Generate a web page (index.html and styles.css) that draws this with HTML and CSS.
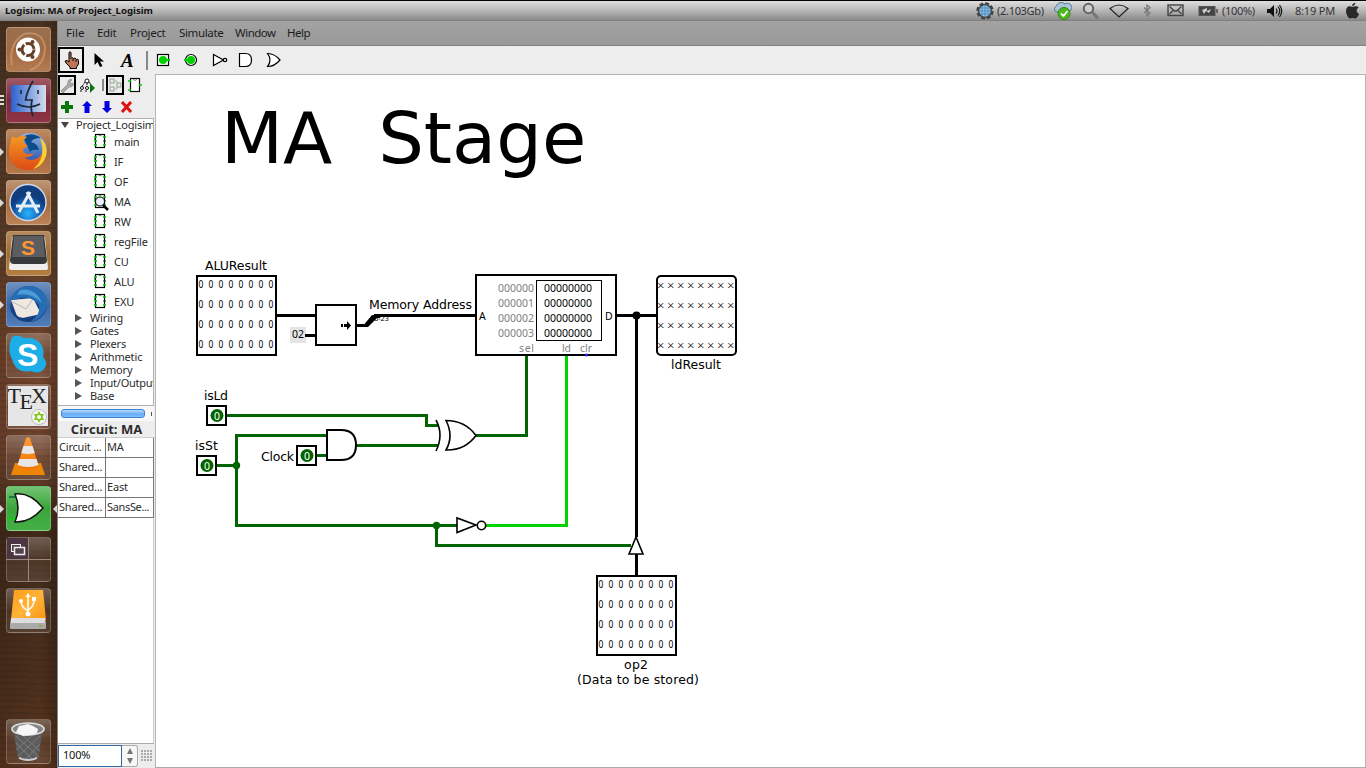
FILE: index.html
```html
<!DOCTYPE html>
<html lang="en">
<head>
<meta charset="utf-8">
<title>Logisim: MA of Project_Logisim</title>
<link rel="stylesheet" href="styles.css">
</head>
<body>
<svg width="0" height="0" class="defs">
  <defs>
    <symbol id="chip" viewBox="0 0 14 16"><rect x="2.500" y="1.500" width="9" height="13" fill="#fff" stroke="#000" stroke-width="1.200"/><path d="M5.500 2q1.500 2 3 0" fill="none" stroke="#777"/><path d="M1 4h3M1 8h3M1 12h3" stroke="#0c0" stroke-width="1.600"/><path d="M10 4h3M10 12h3" stroke="#0c0" stroke-width="1.600"/><path d="M10 8h3M1 6h2" stroke="#042" stroke-width="1.200"/></symbol>
    <linearGradient id="blue" x2="0" y2="1"><stop stop-color="#8fb3df"/><stop offset="1" stop-color="#1746ae"/></linearGradient>
    <linearGradient id="face" x2="1" y2="0"><stop stop-color="#2c60cf"/><stop offset=".55" stop-color="#86a5df"/><stop offset="1" stop-color="#d5dbe9"/></linearGradient>
    <radialGradient id="appblue" cy=".8"><stop stop-color="#29b3ff"/><stop offset=".8" stop-color="#1455a5"/><stop offset="1" stop-color="#123d7c"/></radialGradient>
    <linearGradient id="cone" x2="0" y2="1"><stop stop-color="#ff9a38"/><stop offset="1" stop-color="#f07800"/></linearGradient>
    <linearGradient id="drive" x2="1" y2="1"><stop stop-color="#ff9c14"/><stop offset=".5" stop-color="#ffb43a"/><stop offset="1" stop-color="#f79410"/></linearGradient>
    <linearGradient id="fox" x2="0" y2="1"><stop stop-color="#f49a23"/><stop offset="1" stop-color="#dd4a14"/></linearGradient>
  </defs>
</svg>

<header class="panel">
  <span class="panel-title">Logisim: MA of Project_Logisim</span>
  <div class="tray">
    <svg class="gear" width="18" height="18" viewBox="0 0 18 18"><circle cx="9" cy="9" r="7.400" fill="none" stroke="#444" stroke-width="2.600" stroke-dasharray="3.800 2.010"/><circle cx="9" cy="9" r="6.400" fill="#8cc3ec" stroke="#444" stroke-width="1.500"/><path d="M3 9h12M4 6h10M4 12h10M9 3v12M6 4v10M12 4v10" stroke="#4c86b4" stroke-width=".8"/></svg>
    <span class="t-mem">(2.103Gb)</span>
    <svg class="cloud" width="20" height="19" viewBox="0 0 20 19"><path d="M4 11a3.500 3.500 0 0 1 .5-6A5 5 0 0 1 13 3a4 4 0 0 1 5 7z" fill="#a9c4d6" stroke="#557b93"/><circle cx="12" cy="12.500" r="6" fill="#4fb81e" stroke="#2f8a10"/><path d="M9 12.500l2.500 2.500 4-5" fill="none" stroke="#fff" stroke-width="1.800"/></svg>
    <svg class="search" width="17" height="18" viewBox="0 0 17 18"><circle cx="6.500" cy="6.500" r="4.700" fill="#ccc" stroke="#666" stroke-width="2"/><path d="M10 10l6 6.500" stroke="#777" stroke-width="3"/></svg>
    <svg class="wifi" width="20" height="14" viewBox="0 0 20 14"><path d="M1 4.500Q10-2.500 19 4.500L10 13z" fill="none" stroke="#222" stroke-width="1.200"/></svg>
    <svg class="bt" width="9" height="13" viewBox="0 0 9 13"><path d="M1 3.500l6 5.500-3 3V1l3 2.500L1 9" fill="none" stroke="#777" stroke-width="1.200"/></svg>
    <svg class="mail" width="17" height="13" viewBox="0 0 17 13"><rect x="1" y="1" width="15" height="10.500" fill="none" stroke="#444" stroke-width="1.400"/><path d="M2.500 2.500l5 4.500h2l5-4.500M2.500 10l4-4M14.500 10l-4-4" fill="none" stroke="#444" stroke-width="1.300"/></svg>
    <svg class="batt" width="20" height="12" viewBox="0 0 20 12"><rect x="1" y="1.500" width="16" height="9" fill="#444" stroke="#555"/><path d="M18 4h2v4h-2z" fill="#666"/><path d="M4 5l5-2v3l4-2-2 4-3-2-2 3z" fill="#ccc"/></svg>
    <span class="t-batt">(100%)</span>
    <svg class="sound" width="17" height="14" viewBox="0 0 17 14"><path d="M1 5h3l4-4v12L4 9H1z" fill="#111"/><path d="M10 4.500q2 2.500 0 5M12 2.500q3.500 4.500 0 9M13.500 1q4.500 6 0 12" fill="none" stroke="#111" stroke-width="1.200"/></svg>
    <span class="t-time">8:19 PM</span>
    <svg class="apple" width="15" height="17" viewBox="0 0 15 17"><path d="M7.500 5C4 3 1 5 1 9c0 4 3 8 4.500 7.500 1.500-.6 2.500-.6 4 0C11.500 17 14 13 14 12c-3-1.500-3-5-.3-6.500C12 3.500 9.500 4 7.500 5z" fill="#292929"/><path d="M7 4.300C7 2 9 .8 10.200.5 10.500 2.500 9 4 7 4.300z" fill="#292929"/></svg>
  </div>
</header>

<div class="desktop">
  <nav class="dock">
    <div class="tile ubuntu"><svg viewBox="0 0 45 45"><path d="M6 38Q2 17 18 7Q36 3 39 20Q39 38 24 43" fill="none" stroke="#d3a47c" stroke-width="2" opacity=".6"/><circle cx="22" cy="22.500" r="12" fill="#fff"/><circle cx="22" cy="22.500" r="6" fill="none" stroke="#654026" stroke-width="3" stroke-dasharray="11 1.570"/><g fill="#654026"><circle cx="13.500" cy="22.500" r="2"/><circle cx="26.500" cy="15" r="2"/><circle cx="26.500" cy="30" r="2"/></g></svg></div>
    <div class="tile finder run3"><svg viewBox="0 0 45 45"><rect x="5" y="7" width="35" height="27" rx="1" fill="url(#face)"/><path d="M15 12v4M32 12v4" stroke="#123" stroke-width="1.500"/><path d="M27 3Q21 13 19.500 22H26Q24 31 27 38M11 26q12 6 23 0" fill="none" stroke="#1c2638" stroke-width="1.700"/></svg></div>
    <div class="tile firefox run"><svg viewBox="0 0 45 45"><circle cx="24" cy="21" r="17" fill="url(#blue)"/><path d="M17 8q8-6 18 1-8 0-10 4 7 2 8 8-7-1-9 2z" fill="#0c4c89"/><path d="M5 9c3-3 4 0 5 0 3-2 8-3 11-1-3 2-4 4-3 6l4 3-5 3c0 5 6 6 11 4-2 4-7 5-10 4 7 6 18 2 19-8l1-5c5 13-2 26-15 26C8 41 2 31 3 21c0-4 2-6 2-12z" fill="url(#fox)"/><path d="M34 9c6 4 8 12 6 18-3 9-9 12-13 13 9-7 12-17 7-31z" fill="#f9cf36"/></svg></div>
    <div class="tile store run"><svg viewBox="0 0 45 45"><circle cx="22" cy="22.500" r="18" fill="url(#appblue)" stroke="#cbd8ed" stroke-width="1.500"/><path d="M10 26h24M21 12l11 21M24 12L13 32" fill="none" stroke="#e5edf6" stroke-width="3"/></svg></div>
    <div class="tile sublime run"><svg viewBox="0 0 45 45"><path d="M6 6h33l3 31q0 2-3 2H6q-3 0-3-2z" fill="#eee"/><path d="M7 4h31l3 25q0 4-4 4H8q-4 0-4-4z" fill="#38393b"/><path d="M8 5h29l2 21H6z" fill="#5b5d60"/><text x="15" y="24" class="sub-s">S</text></svg></div>
    <div class="tile thunder run"><svg viewBox="0 0 45 45"><circle cx="23" cy="22" r="18" fill="#173f80"/><path d="M5 18l22-2 8 16-23 5z" fill="#eee8e1"/><path d="M5 19l15 8 7-10" fill="none" stroke="#bcb8b3"/><path d="M4 17Q11 3 25 4q17 3 16 19-3 14-17 17 11-7 9-17-9-11-22-6-4 0-7 2z" fill="#266eb3"/><path d="M14 8q15-3 22 13-11-11-25-8z" fill="#4b9cd8"/><path d="M4 20q0 10 9 15l9 2q-3 4-9 1Q2 31 4 20z" fill="#173f80"/></svg></div>
    <div class="tile skype"><svg viewBox="0 0 45 45"><path d="M6 4q6-3 12 1 14-2 19 10 1 5 0 9 6 6 1 12-5 6-13 2Q10 41 6 26 2 20 4 10z" fill="#1daee8"/><text x="11" y="33" class="sky-s">S</text></svg></div>
    <div class="tile tex"><svg viewBox="0 0 45 45"><rect x="2" y="2" width="40" height="40" fill="#e6e6e6"/><text x="1.500" y="19" class="tex-t">T<tspan x="13.500" y="25">E</tspan><tspan x="25" y="19">X</tspan></text><circle cx="33" cy="33" r="7.500" fill="#f7f7f7" stroke="#bbb"/><path d="M33 27l1.700 3 3.500-.1-1.600 3.100 1.600 3.100-3.500-.1-1.700 3-1.700-3-3.500.1 1.600-3.100-1.600-3.100 3.500.1z" fill="#83c81f"/><circle cx="33" cy="33" r="2" fill="#fff"/></svg></div>
    <div class="tile vlc"><svg viewBox="0 0 45 45"><path d="M9 28L5 40h34l-4-12z" fill="#ec8508"/><path d="M20 3q2-1.500 4 0l9 29q-11 6-22 0z" fill="url(#cone)"/><path d="M17.500 11h9l2.300 7q-6.500 2-13.500 0z" fill="#e7e7e7"/><path d="M13.500 24h17l2 6q-10 4-21 0z" fill="#e7e7e7"/></svg></div>
    <div class="tile logisim run active"><svg viewBox="0 0 45 45"><path d="M3 11h10" stroke="#063" stroke-width="1.500"/><path d="M3 33h10" stroke="#0d0" stroke-width="1.500"/><path d="M9 8Q24 6 37 22 24 37 9 36 15 22 9 8z" fill="#fff" stroke="#111" stroke-width="1.500"/></svg></div>
    <div class="tile spaces"><svg viewBox="0 0 45 45"><path d="M1 1h21v21H1z" fill="#4b3541"/><path d="M22.500 0v45M0 22.500h45" stroke="#9b897f"/><g fill="#54434c" stroke="#eee"><rect x="5.500" y="7.500" width="9" height="7"/><rect x="8.500" y="10.500" width="10" height="7" stroke-width="1.500"/></g></svg></div>
    <div class="tile usb"><svg viewBox="0 0 45 45"><path d="M8 2h29l3 30H5z" fill="url(#drive)"/><path d="M5 30h34l1 9q0 2-2 2H6q-2 0-2-2z" fill="#ddd"/><path d="M4 35h36v4q0 2-2 2H6q-2 0-2-2z" fill="#aaa"/><path d="M22 26V8M22 23q-7-4-7-10M22 22q6-3 6-10" fill="none" stroke="#fff7e7" stroke-width="1.700"/><path d="M22 5l-2.500 4h5z" fill="#fff"/><circle cx="22" cy="26" r="2.500" fill="#fff"/><circle cx="15" cy="13" r="2" fill="#fff"/><path d="M26 9h4v4h-4z" fill="#fff"/><path d="M33 38h3" stroke="#9a3" stroke-width="2"/></svg></div>
    <div class="dock-space"></div>
    <div class="tile trash"><svg viewBox="0 0 45 45"><path d="M7 11h30l-5 28q-10 5-20 0z" fill="#5c5c5c"/><path d="M10 17l23 21M14 14l20 18M10 24l16 16M34 17L12 37M29 14L10 31M34 25L20 40" stroke="#7d7d7d"/><ellipse cx="22" cy="10" rx="16" ry="6" fill="#858585" stroke="#ddd" stroke-width="1.700"/><path d="M10 13l3-6 5-1 4-1 5 2 5 3-1 4-5 2-9 1z" fill="#f6f6f6"/><path d="M13 38q9 4 18 0v2q-9 4-18 0z" fill="#cfcfd5"/></svg></div>
  </nav>

  <div class="app">
    <div class="menubar"><span class="m-file">File</span><span class="m-edit">Edit</span><span class="m-project">Project</span><span class="m-sim">Simulate</span><span class="m-window">Window</span><span class="m-help">Help</span></div>
    <div class="toolbar">
      <div class="tool picked"><svg width="18" height="18" viewBox="0 0 18 18"><path d="M6 1.500q1.500-1.500 2 0v6l1-1 1.500 1L12 7l1.500 1.500q2-1 2 1V13l-2 3v1.500H7V16l-4-4-1-2 2-.5 2 1.500z" fill="#bd7458" stroke="#000"/><path d="M10 8v2M13 8.500V11" stroke="#000"/></svg></div>
      <svg class="arrow" width="12" height="18" viewBox="0 0 12 18"><path d="M1.500 2v12l3-3 2.500 5 2.500-1L7 10.500h4z"/></svg>
      <span class="text-tool">A</span>
      <i class="tool-sep"></i>
      <svg class="gates" width="126" height="20" viewBox="0 0 126 20"><g fill="#fff" stroke="#000" stroke-width="1.200"><rect x="1.500" y="4.500" width="11" height="11"/><circle cx="35" cy="10" r="5.500"/><path d="M57.500 4.500v11l10-5.500z"/><circle cx="69" cy="10" r="1.700"/><path d="M83.500 3.500h6q6 0 6 6.500t-6 6.500h-6z"/><path d="M111.500 3.500q7 0 12.500 6.500-5.500 6.500-12.500 6.500 5-6.500 0-13z"/></g><g fill="#00d000"><circle cx="7" cy="10" r="4"/><path d="M10 9h4v2h-4zM28 9h4v2h-4z"/><circle cx="35" cy="10" r="4"/></g></svg>
    </div>
    <div class="work">
      <aside class="side">
        <div class="modes">
          <svg width="96" height="22" viewBox="0 0 96 22"><g fill="#ececec" stroke="#000" stroke-width="2"><rect x="1" y="1" width="16" height="18"/><rect x="49" y="1" width="16" height="18"/></g><path d="M3 16l7-7q-1-4 3-5l1 1-2 2 1 2 2-1q1 4-4 4l-6 6z" fill="#aaa" stroke="#999"/><g fill="#fff" stroke="#111"><circle cx="29" cy="6" r="2"/><path d="M27 7l-4 6M31 7l4 6M29 8v4" stroke-dasharray="2 1"/><circle cx="24" cy="13" r="1.500"/><circle cx="29" cy="13" r="1.500"/><path d="M23 15v2M28 15v2"/></g><path d="M32 8l5 5-5 5z" fill="#087708"/><path d="M45 4v12" stroke="#888" stroke-width="2"/><g fill="none" stroke="#999"><rect x="52" y="4" width="4" height="4"/><rect x="52" y="12" width="4" height="4"/><rect x="59" y="8" width="4" height="4"/></g><path d="M56 6h3v3M56 14h3v-2M51 10h2" fill="none" stroke="#9c9"/><rect x="72.500" y="3.500" width="9" height="13" fill="#fff" stroke="#111" stroke-width="1.200"/><path d="M75 4q2 3 4 0" fill="none" stroke="#777"/><path d="M70 6h3M81 10h3M70 15h3" stroke="#0c0" stroke-width="1.500"/></svg>
        </div>
        <div class="actions">
          <svg width="96" height="20" viewBox="0 0 96 20"><path d="M7 4h4v4h4v4h-4v4H7v-4H3V8h4z" fill="#087908"/><path d="M29 4l5 5h-2.500v7h-5V9H24z" fill="#0000e2"/><path d="M49 16l5-5h-2.500V4h-5v7H44z" fill="#0000e2"/><path d="M64 5l9 10M73 5l-9 10" stroke="#dd1010" stroke-width="3"/></svg>
        </div>
        <div class="tree">
          <div class="root"><i class="down"></i><span>Project_Logisim</span></div>
          <div class="circ"><svg><use href="#chip"/></svg><span>main</span></div>
          <div class="circ"><svg><use href="#chip"/></svg><span>IF</span></div>
          <div class="circ"><svg><use href="#chip"/></svg><span>OF</span></div>
          <div class="circ"><svg viewBox="0 0 14 16"><use href="#chip" width="14" height="16"/><circle cx="7" cy="8.500" r="4.500" fill="#eef" stroke="#000"/><path d="M10 12l5 5" stroke="#000" stroke-width="2.500"/></svg><span>MA</span></div>
          <div class="circ"><svg><use href="#chip"/></svg><span>RW</span></div>
          <div class="circ"><svg><use href="#chip"/></svg><span>regFile</span></div>
          <div class="circ"><svg><use href="#chip"/></svg><span>CU</span></div>
          <div class="circ"><svg><use href="#chip"/></svg><span>ALU</span></div>
          <div class="circ"><svg><use href="#chip"/></svg><span>EXU</span></div>
          <div class="lib"><i></i><span>Wiring</span></div>
          <div class="lib"><i></i><span>Gates</span></div>
          <div class="lib"><i></i><span>Plexers</span></div>
          <div class="lib"><i></i><span>Arithmetic</span></div>
          <div class="lib"><i></i><span>Memory</span></div>
          <div class="lib"><i></i><span class="io">Input/Output</span></div>
          <div class="lib"><i></i><span>Base</span></div>
        </div>
        <div class="hscroll"><i class="thumb"></i><i class="tick"></i></div>
        <div class="attr-title">Circuit: MA</div>
        <div class="attrs">
          <span>Circuit ...</span><span>MA</span>
          <span>Shared...</span><span></span>
          <span>Shared...</span><span>East</span>
          <span>Shared...</span><span class="tight">SansSe...</span>
        </div>
        <div class="blank"></div>
        <div class="zoom"><span class="field">100%</span><span class="spin"><i class="up"></i><i class="dn"></i></span><i class="dots"></i></div>
      </aside>
      <main class="canvas">
        <svg width="1209" height="693" viewBox="156 75 1209 693">
          <text class="title" x="221" y="163" xml:space="preserve">MA  Stage</text>

          <g class="wire black"><path d="M276 315.500H317M305 335.500H317M356 325.500H364M374 315.500H477M616 315.500H657M636.500 315V537M636.500 554V576"/></g>
          <path d="M362 327l10-12h10l-2 3h-3l-9 9z"/>
          <g class="wire dark"><path d="M226 415.500H426.500V425.500H438M216 465.500H236.500M328 435.500H236.500V525.500H457M316 455.500H328M356 445.500H438M476 435.500H526.500V355M436.500 525V545.500H631"/></g>
          <g class="wire light"><path d="M486 525.500H566.500V355"/></g>
          <circle cx="636.500" cy="315.500" r="4"/>
          <g fill="#006400"><circle cx="236.500" cy="465.500" r="3.700"/><circle cx="436.500" cy="525.500" r="3.700"/></g>

          <g class="shape">
            <rect x="197" y="276" width="79" height="79"/>
            <rect x="316" y="305" width="40" height="40"/>
            <rect x="476" y="275" width="140" height="80"/>
            <rect x="657" y="276" width="79" height="79" rx="4"/>
            <rect x="597" y="576" width="79" height="79"/>
            <rect x="207" y="406" width="19" height="19"/>
            <rect x="197" y="456" width="19" height="19"/>
            <rect x="297" y="446" width="19" height="19"/>
            <path d="M327 430h14q15 0 15 15t-15 15h-14z"/>
            <path class="fine" d="M446 420.500q19 0 30 15-11 15-30 14.500 8-14 0-29.500z"/>
            <path class="fine" d="M436 420q8 15 0 31" fill="none"/>
            <path class="fine" d="M457 518v14.500l19-7.500z"/>
            <circle class="fine" cx="481.500" cy="525.500" r="4.200"/>
            <path class="fine" d="M636 537l-7 17h14z"/>
            <rect x="536.500" y="280.500" width="65" height="60" class="thin"/>
          </g>
          <g fill="#006400"><circle cx="217" cy="415.500" r="6.500"/><circle cx="207" cy="465.500" r="6.500"/><circle cx="307" cy="455.500" r="6.500"/></g>
          <g class="bit-on"><text x="214" y="419.500">0</text><text x="204" y="469.500">0</text><text x="304" y="459.500">0</text></g>

          <path d="M341 324h2v3h-2zM344 324h3v-3l4 4.500-4 4.500v-3h-3z"/>
          <rect x="290" y="327" width="16" height="16" fill="#e4e4e4"/>
          <path d="M305 335.500h11" stroke="#000" stroke-width="3"/>
          <text class="bits" x="292" y="338" textLength="12">02</text>

          <g class="bits" transform="translate(198.500 0) scale(.8 1)">
            <text y="288" x="0 12.500 25 37.500 50 62.500 75 87.500">00000000</text>
            <text y="308" x="0 12.500 25 37.500 50 62.500 75 87.500">00000000</text>
            <text y="328" x="0 12.500 25 37.500 50 62.500 75 87.500">00000000</text>
            <text y="348" x="0 12.500 25 37.500 50 62.500 75 87.500">00000000</text>
          </g>
          <g class="bits" transform="translate(598.500 0) scale(.8 1)">
            <text y="588" x="0 12.500 25 37.500 50 62.500 75 87.500">00000000</text>
            <text y="608" x="0 12.500 25 37.500 50 62.500 75 87.500">00000000</text>
            <text y="628" x="0 12.500 25 37.500 50 62.500 75 87.500">00000000</text>
            <text y="648" x="0 12.500 25 37.500 50 62.500 75 87.500">00000000</text>
          </g>
          <g class="unknown">
            <text y="289.500" x="657 667 677 687 697 707 717 727">××××××××</text>
            <text y="309.500" x="657 667 677 687 697 707 717 727">××××××××</text>
            <text y="329.500" x="657 667 677 687 697 707 717 727">××××××××</text>
            <text y="349.500" x="657 667 677 687 697 707 717 727">××××××××</text>
          </g>
          <g class="bits gray"><text x="498" y="292" textLength="36">000000</text><text x="498" y="307" textLength="36">000001</text><text x="498" y="322" textLength="36">000002</text><text x="498" y="337" textLength="36">000003</text><text x="519" y="352" textLength="15">sel</text><text x="562" y="352" textLength="9">ld</text><text x="580" y="352" textLength="12">clr</text></g>
          <g class="bits"><text x="544" y="292" textLength="48">00000000</text><text x="544" y="307" textLength="48">00000000</text><text x="544" y="322" textLength="48">00000000</text><text x="544" y="337" textLength="48">00000000</text><text x="479" y="320">A</text><text x="605" y="320">D</text></g>
          <circle cx="586.500" cy="355" r="1.500" fill="#22f"/>

          <g class="label">
            <text x="205" y="270" textLength="62">ALUResult</text>
            <text x="369" y="309" textLength="103">Memory Address</text>
            <text x="671" y="369" textLength="50">ldResult</text>
            <text x="204" y="400" textLength="24">isLd</text>
            <text x="195" y="450" textLength="23">isSt</text>
            <text x="261" y="461" textLength="33">Clock</text>
            <text x="624" y="669" textLength="24">op2</text>
            <text x="577" y="684" textLength="122">(Data to be stored)</text>
          </g>
          <text class="tiny" x="374" y="321" textLength="15">0-23</text>
        </svg>
      </main>
    </div>
  </div>
</div>
</body>
</html>
```
FILE: styles.css
```css
* { box-sizing: border-box; }
body { margin: 0; width: 1366px; height: 768px; overflow: hidden; display: flex; flex-direction: column; font-family: "Noto Sans", "Open Sans", sans-serif; font-size: 11px; color: #2c2c2c; background: #fff; }
.defs { position: absolute; }
svg { display: block; flex: none; }

.panel { height: 21px; flex: none; display: flex; align-items: center; justify-content: space-between; padding: 0 6px 0 5px; border-top: 1px solid #000; background: linear-gradient(#dedede, #c6c6c6 30%, #8b8b8b 95%, #777); }
.panel-title { margin-top: -2px; font-family: "Noto Sans", sans-serif; font-weight: 700; font-size: 9.6px; color: #111; white-space: nowrap; width: 160px; }
.tray { display: flex; align-items: center; height: 20px; margin-top: -1px; font-size: 11px; color: #333; white-space: nowrap; }
.t-mem { width: 47px; margin-left: 3px; letter-spacing: -.3px; }
.cloud { margin-left: 8px; }
.search { margin-left: 10px; }
.wifi { margin-left: 10px; }
.bt { margin-left: 14px; }
.mail { margin-left: 15px; }
.batt { margin-left: 14px; }
.t-batt { width: 34px; margin-left: 4px; letter-spacing: -.3px; }
.sound { margin-left: 10px; }
.t-time { width: 40px; margin-left: 12px; letter-spacing: -.2px; }
.apple { margin-left: 10px; }

.desktop { flex: 1; min-height: 0; display: flex; }
.dock { width: 57px; flex: none; display: flex; flex-direction: column; gap: 6px; padding: 6px 6px 4px; background: repeating-linear-gradient(1deg, rgba(0,0,0,.07) 0 2px, transparent 2px 6px), linear-gradient(90deg, rgba(0,0,0,.12), transparent 70%, rgba(0,0,0,.2)), linear-gradient(#4c3321, #60402a 30%, #74442b 45%, #70432c 58%, #442b1b 68%, #4c301d 88%, #5a351e); }
.tile { position: relative; height: 45px; flex: none; border-radius: 4px; border: 1px solid rgba(255,255,255,.2); background: linear-gradient(rgba(255,255,255,.25), rgba(255,255,255,.06) 50%, rgba(255,255,255,.1)); }
.tile svg { width: 45px; height: 45px; margin: -1px; }
.dock-space { flex: 1; }
.ubuntu { background: linear-gradient(#997050, #a06a42 50%, #b57a50); }
.finder { background: linear-gradient(#a05864, #7b2a3c 50%, #8e3546); }
.firefox { background: linear-gradient(#bd8a63, #a8683c 50%, #b57849); }
.store { background: linear-gradient(#bd9473, #a6693e 50%, #bb8357); }
.sublime { background: linear-gradient(#b38a5f, #a26e33 50%, #b57e40); }
.thunder { background: linear-gradient(#6f8fc0, #3d67a4 50%, #517db9); }
.logisim { background: linear-gradient(#73c373, #3ba53b 50%, #44b044); }
.run::before, .run3::before { content: ""; position: absolute; left: -7px; top: 18px; border: 4px solid transparent; border-left: 4px solid #d9d9d9; border-right: 0; }
.run3::before { top: 16px; border: 0; width: 4px; height: 11px; background: repeating-linear-gradient(#ddd 0 2px, transparent 2px 4px); }
.active::after { content: ""; position: absolute; right: -7px; top: 18px; border: 4px solid transparent; border-right-color: #d9d9d9; border-left: 0; }
.sub-s { font: 700 21px "Liberation Sans", sans-serif; fill: #ff9632; }
.sky-s { font: 700 32px "Liberation Sans", sans-serif; fill: #fff; }
.tex-t { font: 22px "Liberation Serif", serif; fill: #222; }

.app { flex: 1; min-width: 0; display: flex; flex-direction: column; background: #ededed; border-left: 1px solid #888; }
.menubar { height: 25px; flex: none; display: flex; align-items: center; padding: 0 0 2px 8px; background: linear-gradient(#a3a3a3, #989898); border-bottom: 1px solid #818181; font-size: 11.5px; color: #1c1c1c; white-space: nowrap; }
.m-file { width: 31px; } .m-edit { width: 33px; } .m-project { width: 49px; } .m-sim { width: 56px; letter-spacing: -.35px; } .m-window { width: 52px; letter-spacing: -.5px; }
.m-project { letter-spacing: -.3px; } .m-edit { letter-spacing: -.3px; } .m-help { letter-spacing: -.5px; }
.toolbar { height: 28px; flex: none; display: flex; align-items: center; }
.tool { width: 26px; height: 26px; padding: 2px 3px; border: 2px solid #000; }
.arrow { margin-left: 9px; }
.text-tool { width: 14px; margin-left: 16px; padding-top: 1px; font: italic 700 19px/20px "Liberation Serif", serif; color: #000; }
.tool-sep { width: 2px; height: 19px; margin-left: 11px; background: #888; }
.gates { margin-left: 8px; }
.work { flex: 1; min-height: 0; display: flex; }
.side { width: 97px; flex: none; display: flex; flex-direction: column; }
.modes { height: 22px; padding-top: 1px; }
.actions { height: 22px; padding-top: 1px; }
.tree { height: 288px; flex: none; margin-right: 1px; background: #fff; border: 1px solid #b0b0b0; border-left: 0; overflow: hidden; white-space: nowrap; letter-spacing: -.15px; }
.root, .lib { height: 13px; display: flex; align-items: center; }
.root { height: 12px; padding-bottom: 1px; }
.root i { margin-left: 3px; border: 4px solid transparent; border-top: 6px solid #444; border-bottom: 0; }
.root span { margin-left: 7px; font-size: 11px; }
.circ { height: 20px; display: flex; align-items: center; padding-left: 35px; }
.circ svg { width: 14px; height: 16px; overflow: visible; }
.circ span { margin-left: 7px; }
.lib { padding-left: 17px; }
.lib i { border: 4px solid transparent; border-left: 7px solid #555; border-right: 0; }
.lib span { margin-left: 8px; }
.lib .io { letter-spacing: -.25px; }
.hscroll { height: 15px; flex: none; margin-right: 1px; display: flex; align-items: center; padding-left: 3px; background: #f8f8f8; }
.thumb { width: 84px; height: 9px; border: 1px solid #3e82cb; border-radius: 3px; background: linear-gradient(#b7daff, #65acf5 60%, #80c0ff); }
.tick { width: 1px; height: 4px; margin-left: 6px; background: #555; }
.attr-title { height: 17px; flex: none; text-align: center; font: 700 13px/17px "Open Sans", sans-serif; white-space: nowrap; border-bottom: 1px solid #ccc; }
.attrs { display: grid; grid-template-columns: 48px 48px; grid-auto-rows: 20px; width: 96px; background: #fff; flex: none; }
.attrs span { border-right: 1px solid #777; border-bottom: 1px solid #777; padding-left: 1px; font-size: 11px; line-height: 18px; overflow: hidden; white-space: nowrap; letter-spacing: -.2px; }
.attrs .tight { letter-spacing: -.35px; }
.blank { flex: 1; margin-right: 1px; background: #fff; border-bottom: 1px solid #aaa; border-right: 1px solid #ccc; }
.zoom { height: 24px; flex: none; display: flex; padding-top: 1px; }
.field { width: 64px; height: 22px; border: 1px solid #3465a4; background: #fff; padding-left: 4px; line-height: 18px; font-size: 11px; letter-spacing: -.2px; color: #111; }
.spin { width: 16px; height: 22px; border: 1px solid #aaa; border-left: 0; border-radius: 0 3px 3px 0; background: #f7f7f7; display: flex; flex-direction: column; justify-content: space-around; align-items: center; }
.spin i { border: 3px solid transparent; }
.spin .up { border-bottom: 6px solid #777; border-top: 0; }
.spin .dn { border-top: 6px solid #777; border-bottom: 0; }
.dots { width: 12px; height: 12px; margin: 5px 0 0 3px; background: radial-gradient(circle at 1px 1px, #aaa .8px, transparent 1px) 0 0 / 3px 3px; }
.canvas { flex: 1; min-width: 0; background: #fff; border: 1px solid #b5b5b5; border-bottom-color: #aaa; overflow: hidden; }

.title { font: 72px "DejaVu Sans", sans-serif; fill: #000; white-space: pre; }
.wire { fill: none; stroke-width: 3; shape-rendering: crispEdges; }
.black { stroke: #000; } .dark { stroke: #006400; } .light { stroke: #00d200; }
.shape { fill: #fff; stroke: #000; stroke-width: 2; }
.shape .fine { stroke-width: 1.6; }
.shape .thin { stroke-width: 1; }
.bits { font: 10.5px "Noto Sans", sans-serif; fill: #000; }
.gray { fill: #808080; }
.bit-on { font: 10.5px "Noto Sans", sans-serif; fill: #fff; }
.unknown { font: 300 13px "Noto Sans", sans-serif; fill: #000; }
.label { font: 12.5px "DejaVu Sans", sans-serif; fill: #000; }
.tiny { font: 7px "DejaVu Sans", sans-serif; fill: #000; }
```
